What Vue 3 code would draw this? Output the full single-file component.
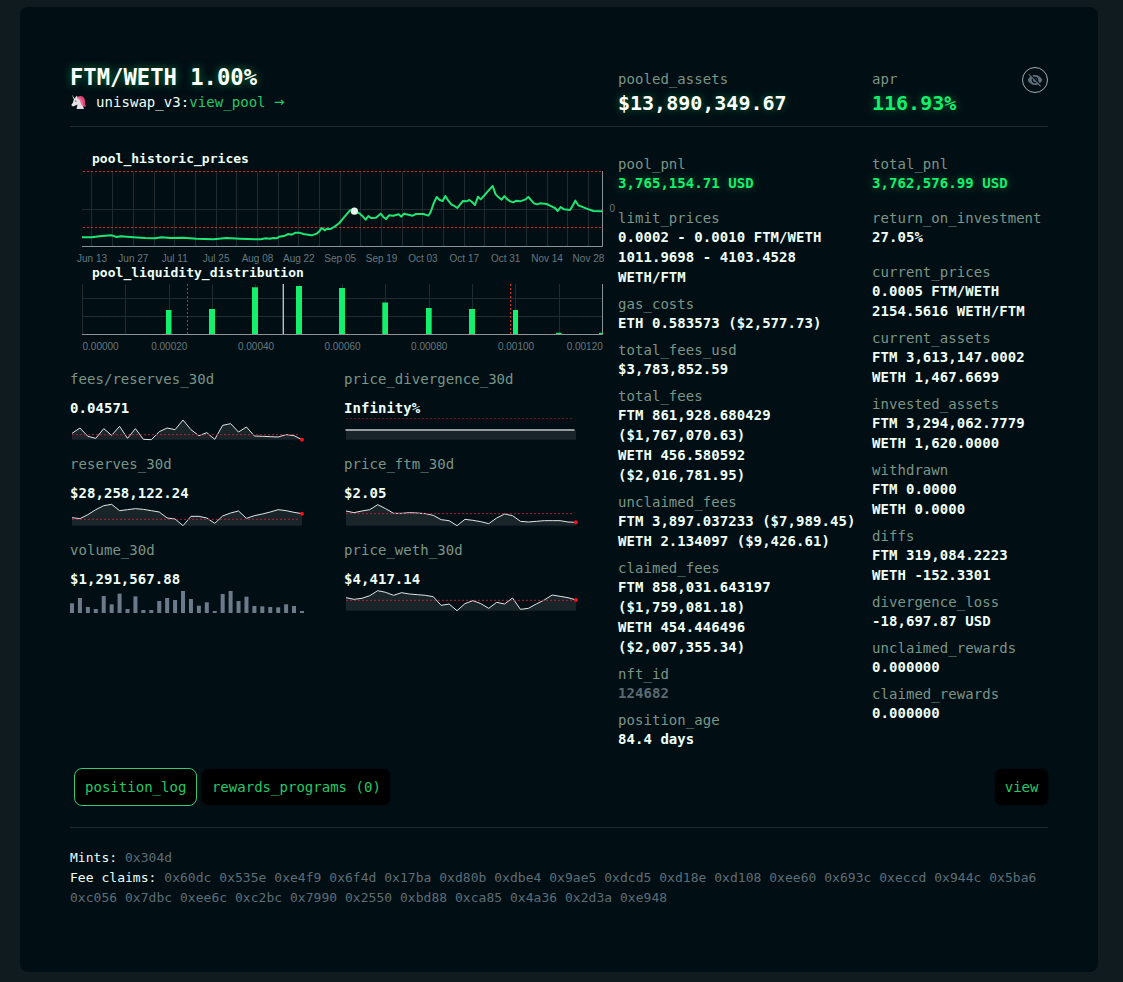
<script setup>
const priceGrid = [91.5, 112.5, 133.5, 154.5, 174.5, 195.5, 216.5, 236.5, 257.5, 278.5, 298.5, 319.5, 340.5, 360.5, 381.5, 402.5, 422.5, 443.5, 464.5, 484.5, 505.5, 526.5, 547.5, 567.5, 588.5].map(x => x - 70)

const dates = ['Jun 13', 'Jun 27', 'Jul 11', 'Jul 25', 'Aug 08', 'Aug 22', 'Sep 05', 'Sep 19', 'Oct 03', 'Oct 17', 'Oct 31', 'Nov 14', 'Nov 28']

// three units per pixel
const priceLine = '36,277 65,277 95,273 125,271 140,276 152,274 190,277 225,279 255,280 275,277 300,279 340,278 380,281 430,283 470,279 510,281 555,283 572,283 587,280 600,281 610,279 620,280 628,275 645,272 655,267 665,269 677,263 688,263 700,267 725,271 740,266 748,259 755,249 764,256 772,251 782,252 795,244 808,234 822,217 840,196 848,194 855,198 868,205 878,214 887,224 895,213 903,219 918,218 932,206 940,216 948,222 957,211 970,212 986,208 994,215 1002,206 1015,209 1028,212 1038,207 1060,207 1075,212 1082,201 1091,175 1100,156 1109,165 1118,168 1126,153 1135,167 1144,178 1153,183 1162,189 1170,179 1179,168 1190,169 1198,165 1206,171 1215,180 1224,155 1232,163 1244,150 1258,134 1268,123 1277,148 1286,157 1295,164 1303,153 1312,163 1321,169 1330,172 1339,167 1350,169 1365,164 1375,156 1384,166 1392,175 1401,178 1410,175 1430,177 1440,182 1455,189 1463,198 1472,186 1482,193 1500,195 1508,182 1516,167 1525,181 1535,185 1550,191 1570,198 1597,199'

const liquidityGrid = [12.5, 55.5, 99.5, 142.5, 185.5, 229.5, 272.5, 315.5, 359.5, 402.5, 445.5, 489.5]

const liquidity = [
  { x: 96, w: 5.5, h: 24 },
  { x: 139, w: 6, h: 25 },
  { x: 182, w: 6, h: 46.7 },
  { x: 226, w: 6, h: 48 },
  { x: 269, w: 6, h: 46 },
  { x: 312.3, w: 5.7, h: 31.5 },
  { x: 356, w: 5.7, h: 26 },
  { x: 399, w: 6, h: 25 },
  { x: 443, w: 5, h: 24 },
  { x: 486, w: 5.5, h: 1.2 },
  { x: 529, w: 4, h: 1.2 }
]

const ticks = [
  { x: 99.3, text: '0.00020' },
  { x: 186, text: '0.00040' },
  { x: 272.5, text: '0.00060' },
  { x: 359.2, text: '0.00080' },
  { x: 446, text: '0.00100' }
]

const stats = [
  { label: 'fees/reserves_30d', value: '0.04571', top: 159, mid: 209, data: [205, 189, 214, 220, 191, 211, 184, 220, 191, 223, 224, 200, 189, 194, 165, 194, 212, 203, 223, 181, 176, 201, 186, 213, 214, 215, 216, 209, 212, 224] },
  { label: 'price_divergence_30d', value: 'Infinity%', flat: true },
  { label: 'reserves_30d', value: '$28,258,122.24', top: 39, mid: 88, data: [83, 86, 74, 59, 47, 43, 62, 59, 56, 58, 62, 66, 84, 87, 107, 79, 79, 84, 100, 78, 69, 63, 85, 77, 72, 66, 59, 62, 67, 71] },
  { label: 'price_ftm_30d', value: '$2.05', top: 39, mid: 71, data: [63, 68, 63, 59, 44, 56, 70, 70, 68, 69, 71, 76, 89, 92, 107, 88, 91, 95, 101, 84, 72, 77, 94, 96, 94, 92, 92, 92, 96, 97] },
  { label: 'volume_30d', value: '$1,291,567.88', bars: [29, 45, 18, 12, 51, 26, 58, 12, 50, 9, 9, 36, 45, 39, 66, 42, 22, 32, 6, 57, 66, 36, 49, 21, 20, 18, 17, 26, 21, 6] },
  { label: 'price_weth_30d', value: '$4,417.14', top: 297, mid: 331, data: [323, 328, 325, 317, 302, 307, 316, 308, 312, 314, 316, 320, 346, 342, 362, 341, 332, 341, 355, 337, 342, 324, 358, 355, 342, 330, 315, 319, 323, 330] }
]

const step = 7.93
const py = (s, v) => (v - s.top) / 3
const linePoints = s => s.data.map((v, i) => `${(2 + i * step).toFixed(2)},${py(s, v).toFixed(2)}`).join(' ')
const areaPoints = s => {
  const floor = py(s, Math.max(...s.data)).toFixed(2)
  return `2,${floor} ${linePoints(s)} 232,${floor}`
}

const positionInfo = [
  { label: 'pool_pnl', lines: ['3,765,154.71 USD'], kind: 'profit', wide: true },
  { label: 'limit_prices', lines: ['0.0002 - 0.0010 FTM/WETH', '1011.9698 - 4103.4528', 'WETH/FTM'] },
  { label: 'gas_costs', lines: ['ETH 0.583573 ($2,577.73)'] },
  { label: 'total_fees_usd', lines: ['$3,783,852.59'] },
  { label: 'total_fees', lines: ['FTM 861,928.680429', '($1,767,070.63)', 'WETH 456.580592', '($2,016,781.95)'] },
  { label: 'unclaimed_fees', lines: ['FTM 3,897.037233 ($7,989.45)', 'WETH 2.134097 ($9,426.61)'] },
  { label: 'claimed_fees', lines: ['FTM 858,031.643197', '($1,759,081.18)', 'WETH 454.446496', '($2,007,355.34)'] },
  { label: 'nft_id', lines: ['124682'], kind: 'muted' },
  { label: 'position_age', lines: ['84.4 days'] }
]

const totalInfo = [
  { label: 'total_pnl', lines: ['3,762,576.99 USD'], kind: 'profit', wide: true },
  { label: 'return_on_investment', lines: ['27.05%'], wide: true },
  { label: 'current_prices', lines: ['0.0005 FTM/WETH', '2154.5616 WETH/FTM'] },
  { label: 'current_assets', lines: ['FTM 3,613,147.0002', 'WETH 1,467.6699'] },
  { label: 'invested_assets', lines: ['FTM 3,294,062.7779', 'WETH 1,620.0000'] },
  { label: 'withdrawn', lines: ['FTM 0.0000', 'WETH 0.0000'] },
  { label: 'diffs', lines: ['FTM 319,084.2223', 'WETH -152.3301'] },
  { label: 'divergence_loss', lines: ['-18,697.87 USD'] },
  { label: 'unclaimed_rewards', lines: ['0.000000'] },
  { label: 'claimed_rewards', lines: ['0.000000'] }
]

const columns = [positionInfo, totalInfo]

const feeClaims = '0x60dc 0x535e 0xe4f9 0x6f4d 0x17ba 0xd80b 0xdbe4 0x9ae5 0xdcd5 0xd18e 0xd108 0xee60 0x693c 0xeccd 0x944c 0x5ba6 0xc056 0x7dbc 0xee6c 0xc2bc 0x7990 0x2550 0xbd88 0xca85 0x4a36 0x2d3a 0xe948'
</script>

<template>
  <main class="card">
    <header class="header">
      <div>
        <h1>FTM/WETH 1.00%</h1>
        <div class="exchange">
          <svg width="17" height="16" viewBox="0 0 17 16">
            <path d="M8 2.6C11 1.2 14.2 2.6 14.9 6c.4 2.4-.6 4.4 1.2 6.600-2 .2-3.200-.6-3.800-2L8.200 5z" fill="#e0457b" />
            <path d="M5 3.8 6.800 1.800 8 3.600c2.800.8 4 3 4.200 5.400.2 2 1.400 3.600 1.600 6H6.800c-.4-1.800.8-2.800.6-4.400-1 .8-2 .8-2.800 1.200-.8.8-2.400.8-3-.2-.4-1 .4-1.600 1-2.400.8-1.200.8-3.800 2.400-5.400z" fill="#e3e0e2" />
            <path d="M7.200 3c2.800-.4 5.200 2 5.400 5.200.1 2 .6 3 1.800 4.200-2.400-.2-3.400-1.800-3.800-4C10.200 6.200 9 5 7.200 4.400z" fill="#ec6a9a" />
            <path d="M4.8 4.4 1.8.6l1.800 5z" fill="#b9a9a2" />
            <circle cx="5.7" cy="7.1" r=".7" fill="#30353c" />
          </svg>
          <span>uniswap_v3:<a class="link">view_pool <span class="arrow">→</span></a></span>
        </div>
      </div>
      <div class="headline">
        <div class="label">pooled_assets</div>
        <div class="amount">$13,890,349.67</div>
      </div>
      <div class="headline">
        <div class="label">apr</div>
        <div class="amount green">116.93%</div>
      </div>
      <button class="hide">
        <svg width="16" height="16" viewBox="0 0 24 24" fill="currentColor">
          <path d="M12 7c2.76 0 5 2.24 5 5 0 .65-.13 1.26-.36 1.83l2.92 2.92c1.51-1.26 2.7-2.89 3.43-4.75-1.73-4.39-6-7.5-11-7.5-1.4 0-2.74.25-3.98.7l2.16 2.16C10.74 7.13 11.35 7 12 7zM2 4.27l2.28 2.28.46.46C3.08 8.3 1.78 10.02 1 12c1.73 4.39 6 7.5 11 7.5 1.55 0 3.03-.3 4.38-.84l.42.42L19.73 22 21 20.73 3.27 3 2 4.27zM7.53 9.8l1.55 1.55c-.05.21-.08.43-.08.65 0 1.66 1.34 3 3 3 .22 0 .44-.03.65-.08l1.55 1.55c-.67.33-1.41.53-2.2.53-2.76 0-5-2.24-5-5 0-.79.2-1.53.53-2.2zm4.31-.78l3.15 3.15.02-.16c0-1.66-1.34-3-3-3l-.17.01z" />
        </svg>
      </button>
    </header>

    <section class="content">
      <div class="charts">
        <svg class="chart" width="548" height="117">
          <text class="chart-title" x="22" y="18">pool_historic_prices</text>
          <g class="grid">
            <line v-for="x in priceGrid" :key="x" :x1="x" :x2="x" y1="27" y2="101" />
            <line x1="12" x2="532" y1="64.5" y2="64.5" />
          </g>
          <path class="axis" d="M12 101.5H532.5V26" />
          <line class="limit" x1="13" x2="532" y1="26.5" y2="26.5" />
          <line class="limit" x1="13" x2="532" y1="82.5" y2="82.5" />
          <g transform="scale(0.33333)">
            <polyline class="price" :points="priceLine" />
          </g>
          <circle cx="284.4" cy="66.2" r="3.6" fill="#e8f5ee" />
          <text class="tick" x="539.5" y="67">0</text>
          <text v-for="(d, i) in dates" :key="d" class="tick middle" :x="22 + i * 41.37" y="117">{{ d }}</text>
        </svg>
        <svg class="chart" width="548" height="100">
          <text class="chart-title" x="22" y="15">pool_liquidity_distribution</text>
          <g class="grid">
            <line v-for="x in liquidityGrid" :key="x" :x1="x" :x2="x" y1="22" y2="72" />
            <line x1="12" x2="532" y1="36.5" y2="36.5" />
            <line x1="12" x2="532" y1="54.5" y2="54.5" />
          </g>
          <path class="axis" d="M12 72.5H532.5V22" />
          <rect v-for="b in liquidity" :key="b.x" :x="b.x" :y="72 - b.h" :width="b.w" :height="b.h" fill="#14f06c" />
          <line class="limit" x1="117.5" x2="117.5" y1="22" y2="72" />
          <line class="limit" x1="440.5" x2="440.5" y1="22" y2="72" />
          <line x1="213.3" x2="213.3" y1="22" y2="72" stroke="#b9c1c4" stroke-width="1.4" />
          <text class="tick" x="12.5" y="88">0.00000</text>
          <text v-for="t in ticks" :key="t.text" class="tick middle" :x="t.x" y="88">{{ t.text }}</text>
          <text class="tick end" x="532.8" y="88">0.00120</text>
        </svg>

        <div class="stats">
          <div v-for="s in stats" :key="s.label" class="stat">
            <div class="label">{{ s.label }}</div>
            <div class="value">{{ s.value }}</div>
            <svg class="chart" width="240" height="25">
              <template v-if="s.data">
                <polygon :points="areaPoints(s)" class="area" />
                <polyline :points="linePoints(s)" class="spark" />
                <line class="limit faint" x1="2" x2="230" :y1="py(s, s.mid)" :y2="py(s, s.mid)" />
                <circle cx="232" :cy="py(s, s.data[29])" r="2" fill="#f0121c" />
              </template>
              <template v-else-if="s.flat">
                <line class="limit dark" x1="2" x2="230" y1=".5" y2=".5" />
                <rect class="area" x="2" y="12" width="230" height="9.7" />
                <line x1="1.5" x2="230.5" y1="12" y2="12" stroke="#969c9e" stroke-width="2" />
              </template>
              <template v-else>
                <rect v-for="(h, i) in s.bars" :key="i" :x="i * step" :y="24 - h / 3" width="4" :height="h / 3" fill="#6c7b8b" />
              </template>
            </svg>
          </div>
        </div>
      </div>

      <div v-for="(col, i) in columns" :key="i" class="info">
        <div v-for="item in col" :key="item.label" class="item" :class="{ wide: item.wide }">
          <div class="label">{{ item.label }}</div>
          <div v-for="line in item.lines" :key="line" class="value" :class="item.kind">{{ line }}</div>
        </div>
      </div>
    </section>

    <div class="actions">
      <button class="btn active">position_log</button>
      <button class="btn">rewards_programs (0)</button>
      <button class="btn view">view</button>
    </div>

    <footer class="log">
      <div>Mints: <span>0x304d</span></div>
      <div>Fee claims: <span>{{ feeClaims }}</span></div>
    </footer>
  </main>
</template>

<style>
body {
  background: #101b20;
}
#app {
  display: flow-root;
}
</style>

<style scoped>
* {
  box-sizing: border-box;
}
.card {
  width: 1078px;
  height: 965px;
  margin: 7px 0 3px 20px;
  padding: 50px 50px 0;
  background: #010f15;
  border-radius: 8px;
  color: #effff6;
  font-family: "DejaVu Sans Mono", monospace;
  font-size: 14px;
  line-height: 20px;
  letter-spacing: 0.05px;
}
.header {
  display: grid;
  grid-template-columns: 548px 254px 1fr 26px;
  height: 70px;
  border-bottom: 1px solid #1e2a2f;
}
h1 {
  margin: 7px 0 0;
  font-size: 22.2px;
  line-height: 26px;
  letter-spacing: 0;
  color: #fff;
  text-shadow: 0 0 8px rgba(20, 240, 108, 0.5);
}
.exchange {
  display: flex;
  align-items: center;
  gap: 9px;
  margin-top: 2px;
}
.link {
  color: #22c867;
}
.arrow {
  font-size: 17px;
  line-height: 1;
}
.headline {
  padding-top: 12px;
}
.label {
  color: #7b9486;
}
.amount {
  font-size: 20px;
  line-height: 28px;
  letter-spacing: 0;
  font-weight: bold;
  color: #fff;
  text-shadow: 0 0 8px rgba(20, 240, 108, 0.4);
}
.amount.green {
  color: #14f06c;
}
.hide {
  display: flex;
  align-items: center;
  justify-content: center;
  width: 26px;
  height: 26px;
  margin-top: 10px;
  padding: 0;
  border: 1px solid #a3abae;
  border-radius: 50%;
  background: none;
  color: #5f6e7b;
}
.content {
  display: grid;
  grid-template-columns: 548px 254px 1fr;
  height: 641px;
}
.charts {
  padding-top: 18px;
}
.chart {
  display: block;
  overflow: visible;
}
.chart-title {
  font-size: 13px;
  font-weight: bold;
  letter-spacing: 0.02px;
  fill: #effff6;
}
.grid line {
  stroke: #1e2b30;
}
.axis {
  fill: none;
  stroke: #8b9396;
}
.limit {
  stroke: #d41f30;
  stroke-dasharray: 2 2;
}
.limit.faint {
  stroke: #b01c3c;
}
.limit.dark {
  stroke: #5c161f;
}
.price {
  fill: none;
  stroke: #1ee673;
  stroke-width: 6;
  stroke-linejoin: round;
}
.tick {
  font-family: "Liberation Sans", Arial, sans-serif;
  font-size: 10px;
  letter-spacing: 0;
  fill: #68777d;
}
.middle {
  text-anchor: middle;
}
.end {
  text-anchor: end;
}
.stats {
  display: grid;
  grid-template-columns: 274px 274px;
  grid-template-rows: 85px 86px 86px;
  padding-top: 7px;
}
.stat .value {
  margin-top: 9px;
}
.area {
  fill: #1a252a;
}
.spark {
  fill: none;
  stroke: #dfe5e6;
  stroke-width: 1;
}
.value {
  font-weight: bold;
}
.info {
  padding-top: 28px;
}
.info .label {
  line-height: 18px;
}
.info .value {
  white-space: nowrap;
}
.item {
  margin-bottom: 8px;
}
.item.wide {
  margin-bottom: 16px;
}
.value.profit {
  color: #14f06c;
  text-shadow: 0 0 8px rgba(20, 240, 108, 0.4);
}
.value.muted {
  color: #5a6a72;
}
.actions {
  display: flex;
  gap: 4px;
  padding: 0 0 21px 4px;
  border-bottom: 1px solid #1e2a2f;
}
.btn {
  height: 38px;
  padding: 0 9.5px 0 10px;
  border: 1px solid #010a0e;
  border-radius: 8px;
  background: #000;
  color: #22c867;
  font: inherit;
  letter-spacing: 0.02px;
}
.btn.active {
  border-color: #35c973;
}
.btn.view {
  margin: 0 -1px 0 auto;
}
.log {
  padding-top: 20px;
  font-size: 13px;
  letter-spacing: 0.03px;
}
.log span {
  color: #5e6d75;
}
</style>
